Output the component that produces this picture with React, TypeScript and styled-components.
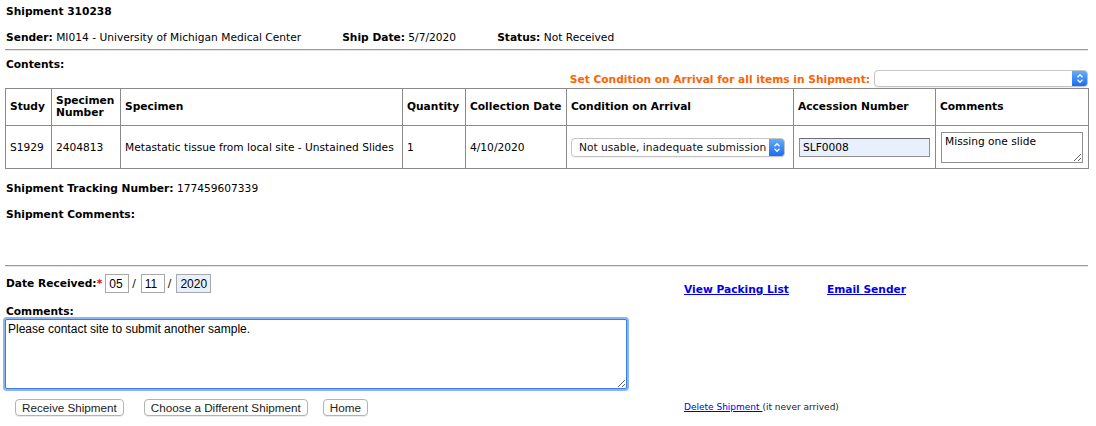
import { ReactElement } from 'react';
import styled, { createGlobalStyle } from 'styled-components';

const GlobalStyle = createGlobalStyle`
  body {
    margin: 0;
    background: #fff;
    color: #000;
    font-family: "DejaVu Sans", Verdana, sans-serif;
    font-size: 10.65px;
  }
`;

const Page = styled.div`
  padding: 5px 8px 0 5px;
  width: 1096px;
  height: 426px;
  box-sizing: border-box;
  overflow: hidden;
`;

const Title = styled.div`
  font-weight: bold;
  line-height: 14px;
  margin-left: 1px;
`;

const MetaRow = styled.div`
  display: flex;
  gap: 41px;
  margin-top: 12px;
  margin-left: 1px;
  line-height: 14px;
`;

const Label = styled.b`
  font-weight: bold;
`;

const Rule = styled.div<{ $top: number }>`
  margin-top: ${(p) => p.$top}px;
  height: 0;
  border-top: 1px solid #9a9a9a;
  border-bottom: 1px solid #e4e4e4;
`;

const SectionLabel = styled.div<{ $top: number }>`
  font-weight: bold;
  line-height: 13px;
  margin-top: ${(p) => p.$top}px;
  margin-left: 1px;
`;

const BulkRow = styled.div`
  display: flex;
  justify-content: flex-end;
  align-items: center;
  gap: 4px;
  height: 17px;
  margin-top: -1px;
`;

const BulkText = styled.span`
  color: #ff6200;
  font-weight: bold;
  line-height: 14px;
  margin-top: 2px;
`;

const MacSelect = styled.div<{ $w: number; $h: number }>`
  display: flex;
  align-items: center;
  width: ${(p) => p.$w}px;
  height: ${(p) => p.$h}px;
  box-sizing: border-box;
  border: 1px solid #c4c4c4;
  border-radius: 4px;
  background: #fff;
  overflow: hidden;
  box-shadow: 0 1px 1px rgba(0, 0, 0, 0.06);
`;

const SelectText = styled.span`
  flex: 1;
  padding-left: 7px;
  white-space: nowrap;
  color: #111;
`;

const SelectCap = styled.span`
  width: 15px;
  align-self: stretch;
  display: flex;
  align-items: center;
  justify-content: center;
  background: linear-gradient(#63acfb, #1b6cf3);
`;

const Table = styled.table`
  margin-top: 1px;
  width: 1083px;
  border-collapse: collapse;
  table-layout: fixed;
`;

const Th = styled.th`
  height: 36px;
  padding: 0 4px;
  border: 1px solid #8a8a8a;
  text-align: left;
  vertical-align: middle;
  line-height: 12px;
  font-weight: bold;
`;

const Td = styled.td`
  height: 42px;
  padding: 0 4px;
  border: 1px solid #8a8a8a;
  vertical-align: middle;
  white-space: nowrap;
  overflow: hidden;
`;

const AccessionInput = styled.input`
  display: block;
  width: 131px;
  height: 19px;
  margin-left: 1px;
  box-sizing: border-box;
  border: 1px solid #8f8f8f;
  border-top-color: #6f6f6f;
  background: #e8f0fe;
  font-family: "DejaVu Sans", Verdana, sans-serif;
  font-size: 10.65px;
  padding: 0 3px;
  color: #000;
`;

const CellTextarea = styled.textarea`
  display: block;
  width: 142px;
  height: 31px;
  margin-left: 1px;
  box-sizing: border-box;
  border: 1px solid #8f8f8f;
  font-family: "DejaVu Sans", Verdana, sans-serif;
  font-size: 10.65px;
  padding: 2px 3px;
  resize: both;
`;

const InfoLine = styled.div<{ $top: number }>`
  margin-top: ${(p) => p.$top}px;
  margin-left: 1px;
  line-height: 14px;
`;

const Lower = styled.div`
  display: grid;
  grid-template-columns: 679px 1fr;
  margin-top: 7px;
`;

const LeftCol = styled.div`
  display: flex;
  flex-direction: column;
`;

const DateRow = styled.div`
  display: flex;
  align-items: center;
  height: 19px;
  margin-left: 1px;
`;

const Required = styled.span`
  color: #e00;
  font-weight: bold;
  margin-right: 3px;
`;

const DateInput = styled.input<{ $w: number; $filled?: boolean }>`
  width: ${(p) => p.$w}px;
  height: 19px;
  box-sizing: border-box;
  border: 1px solid #a8a8a8;
  background: ${(p) => (p.$filled ? '#e8f0fe' : '#fff')};
  font-family: "Liberation Sans", Arial, sans-serif;
  font-size: 12px;
  padding: 0 3px;
  color: #000;
`;

const Slash = styled.span`
  margin: 0 5px 0 3px;
`;

const CommentsBox = styled.textarea`
  display: block;
  margin-top: 1px;
  width: 622px;
  height: 70px;
  box-sizing: border-box;
  border: 1px solid #3c7ce0;
  border-radius: 2px;
  box-shadow: 0 0 0 2px #8ab4f2;
  outline: none;
  font-family: "Liberation Sans", Arial, sans-serif;
  font-size: 12px;
  padding: 2px 2px;
  color: #000;
  resize: both;
`;

const ButtonRow = styled.div`
  display: flex;
  margin-top: 10px;
  padding-left: 10px;
`;

const Button = styled.button<{ $gap?: number }>`
  height: 17px;
  margin-right: ${(p) => p.$gap ?? 0}px;
  padding: 0 6px;
  box-sizing: border-box;
  border: 1px solid #b3b3b3;
  border-radius: 4px;
  background: #fff;
  box-shadow: 0 1px 0 rgba(0, 0, 0, 0.08);
  font-family: "Liberation Sans", Arial, sans-serif;
  font-size: 11.7px;
  color: #222;
  line-height: 15px;
`;

const RightCol = styled.div`
  display: flex;
  flex-direction: column;
  justify-content: space-between;
  padding: 9px 0 3px;
`;

const LinkRow = styled.div`
  display: flex;
  gap: 38px;
  line-height: 13px;
`;

const BoldLink = styled.a`
  color: #0000ee;
  font-weight: bold;
  text-decoration: underline;
`;

const Footnote = styled.div`
  font-size: 9px;
  line-height: 12px;
  color: #222;
`;

const SmallLink = styled.a`
  color: #0000ee;
  text-decoration: underline;
`;

const Chevrons = (): ReactElement => (
  <svg width="8" height="11" viewBox="0 0 8 11">
    <path d="M1.5 4.2 L4 1.7 L6.5 4.2 M1.5 6.8 L4 9.3 L6.5 6.8" stroke="#fff" strokeWidth="1.3" fill="none" />
  </svg>
);

const columns = [46, 69, 282, 63, 101, 227, 142, 153];

const App = (): ReactElement => (
  <Page>
    <GlobalStyle />
    <Title>Shipment 310238</Title>
    <MetaRow>
      <span><Label>Sender:</Label> MI014 - University of Michigan Medical Center</span>
      <span><Label>Ship Date:</Label> 5/7/2020</span>
      <span><Label>Status:</Label> Not Received</span>
    </MetaRow>
    <Rule $top={4} />
    <SectionLabel $top={7}>Contents:</SectionLabel>
    <BulkRow>
      <BulkText>Set Condition on Arrival for all items in Shipment:</BulkText>
      <MacSelect $w={214} $h={17}>
        <SelectText />
        <SelectCap><Chevrons /></SelectCap>
      </MacSelect>
    </BulkRow>
    <Table>
      <colgroup>
        {columns.map((w, i) => <col key={i} style={{ width: w }} />)}
      </colgroup>
      <thead>
        <tr>
          <Th>Study</Th>
          <Th>Specimen<br />Number</Th>
          <Th>Specimen</Th>
          <Th>Quantity</Th>
          <Th>Collection Date</Th>
          <Th>Condition on Arrival</Th>
          <Th>Accession Number</Th>
          <Th>Comments</Th>
        </tr>
      </thead>
      <tbody>
        <tr>
          <Td>S1929</Td>
          <Td>2404813</Td>
          <Td>Metastatic tissue from local site - Unstained Slides</Td>
          <Td>1</Td>
          <Td>4/10/2020</Td>
          <Td>
            <MacSelect $w={214} $h={19}>
              <SelectText>Not usable, inadequate submission</SelectText>
              <SelectCap><Chevrons /></SelectCap>
            </MacSelect>
          </Td>
          <Td>
            <AccessionInput defaultValue="SLF0008" />
          </Td>
          <Td>
            <CellTextarea defaultValue="Missing one slide" />
          </Td>
        </tr>
      </tbody>
    </Table>
    <InfoLine $top={13}><Label>Shipment Tracking Number:</Label> 177459607339</InfoLine>
    <InfoLine $top={12}><Label>Shipment Comments:</Label></InfoLine>
    <Rule $top={43} />
    <Lower>
      <LeftCol>
        <DateRow>
          <Label>Date Received:</Label>
          <Required>*</Required>
          <DateInput $w={24} defaultValue="05" />
          <Slash>/</Slash>
          <DateInput $w={24} defaultValue="11" />
          <Slash>/</Slash>
          <DateInput $w={35} $filled defaultValue="2020" />
        </DateRow>
        <SectionLabel $top={12}>Comments:</SectionLabel>
        <CommentsBox defaultValue="Please contact site to submit another sample." />
        <ButtonRow>
          <Button $gap={20}>Receive Shipment</Button>
          <Button $gap={15}>Choose a Different Shipment</Button>
          <Button>Home</Button>
        </ButtonRow>
      </LeftCol>
      <RightCol>
        <LinkRow>
          <BoldLink href="#">View Packing List</BoldLink>
          <BoldLink href="#">Email Sender</BoldLink>
        </LinkRow>
        <Footnote>
          <SmallLink href="#">Delete Shipment </SmallLink>(it never arrived)
        </Footnote>
      </RightCol>
    </Lower>
  </Page>
);

export default App;
